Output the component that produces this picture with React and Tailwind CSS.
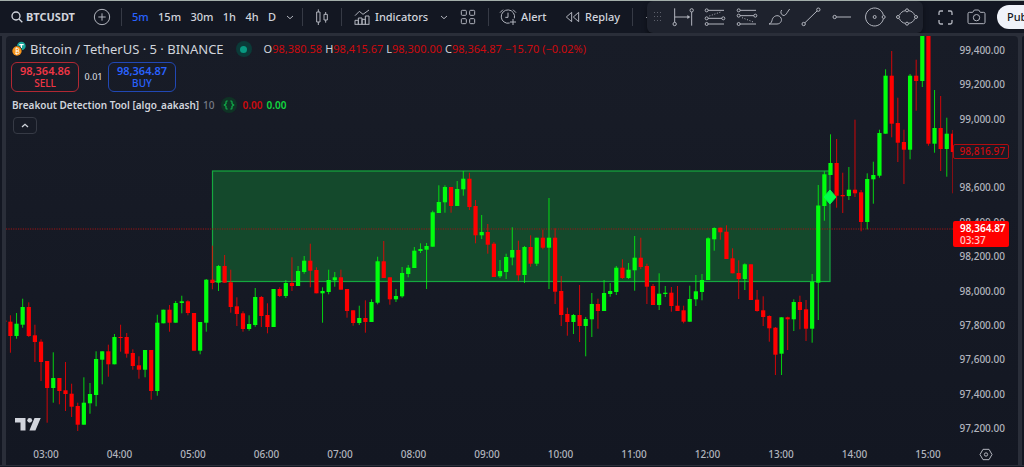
const INTERVALS = ["5m", "15m", "30m", "1h", "4h", "D"];

const PRICES = [
  "99,400.00", "99,200.00", "99,000.00", "98,800.00", "98,600.00", "98,400.00",
  "98,200.00", "98,000.00", "97,800.00", "97,600.00", "97,400.00", "97,200.00",
];

const TIMES = [
  "03:00", "04:00", "05:00", "06:00", "07:00", "08:00", "09:00",
  "10:00", "11:00", "12:00", "13:00", "14:00", "15:00",
];

const UP = "#00ff0d";
const DOWN = "#ff0000";

// [direction, body top, body bottom, wick top, wick bottom]
const CANDLES = [
  ["r", 320.5, 322, 320, 322], ["r", 321.7, 336, 315.3, 352.7], ["g", 323.7, 336, 313, 338.7],
  ["g", 307, 324.7, 298.7, 327.7], ["r", 307, 336, 302.3, 337], ["r", 335.3, 342, 324.7, 362],
  ["r", 341.7, 362, 339.3, 381], ["r", 361, 388, 361, 422.7], ["g", 378, 388, 352.3, 402.7],
  ["r", 378, 391, 378, 404.3], ["r", 390.3, 394, 362, 411], ["r", 393.7, 406.7, 383.7, 417],
  ["r", 406, 424.7, 402.7, 431], ["g", 402.7, 424.7, 377.3, 424.7], ["g", 394, 403.3, 383, 413.7],
  ["g", 359, 395, 351.3, 406.3], ["g", 351.3, 359.7, 351.3, 384.3], ["r", 351.3, 364.3, 344.7, 376.7],
  ["g", 337, 364.3, 334, 364.3], ["r", 337, 338, 324.7, 351.7], ["r", 337, 353.7, 333, 357.7],
  ["r", 353, 366, 349.3, 369.7], ["r", 365.3, 369.7, 356.3, 378.7], ["g", 350, 369.7, 350, 377.3],
  ["r", 350, 391, 350, 399.7], ["g", 322.7, 391, 314.7, 395.7], ["g", 309.7, 323.3, 309.7, 323.3],
  ["r", 309.7, 322.7, 305, 331.7], ["g", 303, 322.7, 301, 322.7], ["g", 301.3, 303, 295.7, 313.3],
  ["r", 301.3, 313, 300.3, 315.3], ["r", 313, 350.7, 313, 350.7], ["g", 322, 350.7, 322, 354.3],
  ["g", 279.7, 322.7, 279, 331.7], ["r", 279.7, 283, 245.7, 289.3], ["g", 266, 282.7, 265, 291],
  ["r", 266, 282.7, 255, 282.7], ["r", 282.3, 307, 269.7, 312.7], ["r", 306.3, 314, 297.3, 326],
  ["r", 313.3, 329, 311.3, 331.7], ["g", 324, 329, 315.3, 330.7], ["g", 297, 325, 288, 326.7],
  ["r", 297, 316, 296, 327], ["r", 315, 327, 303.3, 333.3], ["g", 289, 327, 289, 327],
  ["r", 289, 296, 287.3, 297], ["g", 283, 296, 280, 298], ["r", 283, 286, 257.3, 291],
  ["g", 271, 286, 266, 286], ["g", 260.7, 272, 256, 273.7], ["r", 260.7, 270.7, 243.7, 287.3],
  ["r", 270, 293.3, 267.3, 293.3], ["g", 291, 293.3, 287.3, 322.7], ["g", 280, 292, 269.7, 294.3],
  ["g", 277.3, 280.3, 272, 286.7], ["r", 277.3, 289.7, 269.7, 289.7], ["r", 289, 311, 289, 317.7],
  ["r", 310.3, 323, 310.3, 325.7], ["g", 318, 323, 305.7, 325], ["r", 318, 322, 300.3, 332.7],
  ["g", 302, 322, 299.3, 322], ["g", 261.3, 302.7, 256.7, 304.3], ["r", 261.3, 278, 241, 278],
  ["r", 277.3, 299.3, 277.3, 304.7], ["g", 296, 299.3, 289, 302], ["g", 273, 296.3, 267, 297.7],
  ["g", 267.7, 274, 265, 277.3], ["g", 250.7, 268, 247, 268], ["g", 249, 251, 243.3, 253],
  ["g", 246, 249.7, 243, 289], ["g", 212.3, 246.7, 210.7, 246.7], ["g", 202, 213, 185.3, 213],
  ["g", 187, 202.3, 185.3, 212.7], ["r", 187, 206, 187, 212.7], ["g", 189, 206, 181, 206],
  ["g", 178.7, 189.3, 171, 195.7], ["r", 178.7, 207, 172.7, 210], ["r", 206, 235.3, 200, 243.3],
  ["g", 232, 235.3, 215, 239], ["r", 232, 244.7, 224, 253.7], ["r", 243.7, 277, 242, 277],
  ["g", 271, 276.3, 260, 278], ["g", 257, 272, 253.7, 279], ["g", 250, 257.5, 227.3, 265.3],
  ["r", 250, 275.3, 240.7, 280.7], ["g", 247, 275, 246, 283], ["r", 247, 263.7, 235.3, 266.7],
  ["g", 237.7, 263.7, 237.7, 266], ["r", 237.7, 247.7, 229.7, 249.3], ["g", 237.7, 247.7, 198, 289],
  ["r", 237.7, 291.7, 228.3, 304], ["r", 291, 315, 276, 326], ["r", 314, 322, 307.7, 335.7],
  ["g", 315, 322, 314, 334], ["r", 315, 326, 285, 342], ["g", 319, 326, 317, 356.3],
  ["g", 304, 319.3, 293, 337], ["r", 304, 311, 298.7, 328.7], ["g", 293, 311, 280, 311],
  ["g", 291, 294, 283, 296.7], ["g", 267.7, 292, 266, 295], ["r", 267.7, 278, 259.3, 279],
  ["g", 269.7, 278, 263, 279], ["g", 257.7, 270.3, 236, 290.7], ["r", 257.7, 267, 237.7, 269],
  ["r", 266, 286.7, 263.7, 304], ["r", 286, 305, 284, 305], ["g", 293.7, 305, 273.3, 310],
  ["g", 292.7, 294, 286, 297], ["r", 292.7, 306, 287, 311.7], ["r", 305.7, 311, 286, 311],
  ["r", 310.3, 321.7, 305.7, 323.3], ["g", 299, 321.7, 285.7, 321.7], ["g", 291.3, 299.3, 275, 306],
  ["g", 280, 292, 274, 300.3], ["g", 238.3, 280, 237.3, 280], ["g", 228, 239.3, 227.3, 250.7],
  ["r", 227.7, 232.3, 227.7, 239.7], ["r", 231.7, 259, 225.3, 259], ["r", 258.3, 273.3, 248.3, 273.3],
  ["r", 273, 279, 260.3, 299], ["g", 264.3, 279, 263.3, 290], ["r", 264.3, 300, 264.3, 300],
  ["r", 299.7, 311, 290, 311.7], ["r", 310.3, 317, 296.3, 326], ["r", 316, 328.3, 315.3, 341.7],
  ["r", 327.7, 354.7, 327, 375], ["g", 317.3, 353.7, 317.3, 375], ["r", 317.3, 319.3, 316.7, 350],
  ["g", 302, 319.3, 299.3, 331], ["r", 302, 310, 295.7, 329.3], ["r", 309.3, 328.7, 300, 341],
  ["g", 281.7, 328.7, 274, 342.7], ["g", 205.5, 282.7, 185, 320], ["g", 174.3, 206, 171.3, 220.7],
  ["g", 163, 175, 134.3, 175], ["r", 163, 195.7, 139, 207.7], ["r", 195, 196.3, 172.7, 213],
  ["g", 189.7, 196, 167, 200], ["r", 189.7, 193.3, 119.7, 197], ["r", 192.3, 222, 190, 231.3],
  ["g", 179, 222, 173.3, 229.3], ["g", 175, 179.3, 161.7, 203.7], ["g", 133, 175.7, 129.7, 177.7],
  ["g", 75.7, 133.7, 69.3, 133.7], ["r", 75.7, 123.7, 51, 137.3], ["r", 123, 142.7, 97.7, 162],
  ["r", 142, 149.7, 129.7, 184], ["g", 75.7, 149.7, 74, 159.3], ["r", 75.7, 81, 59.7, 110.7],
  ["g", 36, 81, 36, 87], ["r", 36, 143.7, 36, 145.7], ["g", 128, 143.7, 90, 152.7],
  ["r", 128, 149, 96, 171], ["g", 133.7, 149, 117.7, 176.7], ["r", 133.7, 152, 130, 193.3],
];

function Icon({ box, className, children, weight = 3 }) {
  return (
    <svg
      viewBox={box}
      className={`shrink-0 ${className}`}
      fill="none"
      stroke="currentColor"
      strokeWidth={weight}
      aria-hidden="true"
    >
      {children}
    </svg>
  );
}

function Divider() {
  return <div className="h-[18px] w-px shrink-0 bg-[#363a45]" />;
}

function Chevron() {
  return (
    <Icon box="0 0 24 15" className="h-[5px] w-2">
      <path d="M3 3l9 8 9-8" />
    </Icon>
  );
}

const DRAWING_TOOLS = [
  {
    name: "Date range",
    art: (
      <>
        <path d="M8 4v42M59 15v41M8 30h40" />
        <path d="M46 24l9 6-9 6z" fill="currentColor" stroke="none" />
        <circle cx="8" cy="51" r="5" />
        <circle cx="59" cy="10" r="5" />
      </>
    ),
  },
  {
    name: "Long position",
    art: (
      <>
        <path d="M12 10h48M12 34h42M12 51h48" />
        <path d="M16 27l34-12" strokeDasharray="3 5" />
        <circle cx="8" cy="10" r="4.5" />
        <circle cx="8" cy="34" r="4.5" />
        <circle cx="58" cy="34" r="4.5" />
        <circle cx="8" cy="51" r="4.5" />
      </>
    ),
  },
  {
    name: "Short position",
    art: (
      <>
        <path d="M12 10h48M12 26h42M12 51h48" />
        <path d="M18 32l34 13" strokeDasharray="3 5" />
        <circle cx="8" cy="10" r="4.5" />
        <circle cx="8" cy="26" r="4.5" />
        <circle cx="58" cy="26" r="4.5" />
        <circle cx="8" cy="51" r="4.5" />
      </>
    ),
  },
  {
    name: "Brush",
    art: (
      <>
        <path d="M3 51c8-2 8-8 10-14 3-10 16-15 24-7 8 9 1 21-10 21z" />
        <path d="M41 9c-4 6-3 13 4 16 5 2 9-2 13-9l7-10" />
      </>
    ),
  },
  {
    name: "Trend line",
    art: (
      <>
        <path d="M15 47L51 12" />
        <circle cx="11" cy="51" r="5" />
        <circle cx="55" cy="8" r="5" />
      </>
    ),
  },
  {
    name: "Horizontal ray",
    art: (
      <>
        <path d="M13 30h44" />
        <circle cx="8" cy="30" r="5" />
      </>
    ),
  },
  {
    name: "Circle",
    art: (
      <>
        <path d="M58 24a27 27 0 1 0 0 12" />
        <circle cx="32" cy="30" r="4.5" />
        <circle cx="59" cy="30" r="4.5" />
      </>
    ),
  },
  {
    name: "Ellipse",
    art: (
      <>
        <path d="M10 25c4-8 10-13 18-14M38 11c9 1 15 6 18 14M56 35c-3 8-9 13-18 14M28 49c-8-1-14-6-18-14" />
        <circle cx="33" cy="10" r="4.5" />
        <circle cx="33" cy="50" r="4.5" />
        <circle cx="6" cy="30" r="4.5" />
        <circle cx="60" cy="30" r="4.5" />
      </>
    ),
  },
];

function DrawingToolbar() {
  return (
    <div className="flex h-8 shrink-0 items-center rounded-md bg-[#1e222d] pl-1.5 text-[#b2b5be] shadow-md shadow-black/40">
      <svg viewBox="0 0 9 12" className="mr-[5px] h-3 w-[9px] fill-[#5d606b]" aria-hidden="true">
        {[0, 3, 6].map((x) =>
          [1, 5, 9].map((y) => <rect key={`${x}-${y}`} x={x + 1} y={y} width="1" height="1" />),
        )}
      </svg>
      {DRAWING_TOOLS.map((tool) => (
        <button key={tool.name} type="button" aria-label={tool.name} className="grid w-8 place-items-center">
          <Icon box="0 0 66 60" className="h-5 w-[22px]">
            {tool.art}
          </Icon>
        </button>
      ))}
    </div>
  );
}

function TopBar() {
  return (
    <header className="flex h-8 items-center overflow-hidden bg-[#131722] pl-[11px] text-[11px] leading-4 font-medium text-[#d1d4dc]">
      <button type="button" className="flex w-[82px] shrink-0 items-center gap-[3px] font-bold">
        <Icon box="0 0 36 36" className="size-3" weight={4}>
          <circle cx="15" cy="15" r="12" />
          <path d="M24 24l10 10" />
        </Icon>
        BTCUSDT
      </button>
      <button type="button" aria-label="Compare symbol" className="mr-2.5 shrink-0 text-[#b2b5be]">
        <Icon box="0 0 54 54" className="size-[18px]">
          <circle cx="27" cy="27" r="23" />
          <path d="M27 16v22M16 27h22" />
        </Icon>
      </button>
      <Divider />
      <nav className="flex w-[154px] shrink-0 items-center justify-between pl-2.5" aria-label="Interval">
        {INTERVALS.map((interval) => (
          <button
            key={interval}
            type="button"
            className={interval === "5m" ? "text-[#2962ff]" : ""}
          >
            {interval}
          </button>
        ))}
      </nav>
      <button type="button" aria-label="More intervals" className="mr-2 ml-2.5 shrink-0 text-[#b2b5be]">
        <Chevron />
      </button>
      <Divider />
      <button type="button" aria-label="Candle style" className="mx-3 shrink-0 text-[#b2b5be]">
        <Icon box="0 0 42 54" className="h-[18px] w-3.5">
          <path d="M5 12h10v30H5zM10 4v8M10 42v9M27 19h10v17H27zM32 12v7M32 36v8" />
        </Icon>
      </button>
      <Divider />
      <button type="button" className="ml-3 flex w-[86px] shrink-0 items-center gap-[5px]">
        <Icon box="0 0 48 48" className="size-4 text-[#b2b5be]">
          <path d="M3 20l13-13 11 9L45 3M3 46V34h10v12M13 46V27h11v19M24 46V31h10v15M34 46V21h11v25M2 46h44" />
        </Icon>
        Indicators
      </button>
      <button type="button" aria-label="Favorite indicators" className="shrink-0 text-[#b2b5be]">
        <Chevron />
      </button>
      <button type="button" aria-label="Indicator templates" className="mr-3 ml-3 shrink-0 text-[#b2b5be]">
        <Icon box="0 0 48 48" className="size-4">
          <rect x="4" y="4" width="15" height="15" rx="3" />
          <rect x="29" y="4" width="15" height="15" rx="3" />
          <rect x="4" y="29" width="15" height="15" rx="3" />
          <rect x="29" y="29" width="15" height="15" rx="3" />
        </Icon>
      </button>
      <Divider />
      <button type="button" className="ml-2.5 flex w-[66px] shrink-0 items-center gap-1">
        <Icon box="0 0 54 54" className="size-[18px] text-[#b2b5be]">
          <path d="M32 45a20 20 0 1 1 14-14M27 14v14h-8M3 14l9-9M51 14l-9-9M42 33v18M33 42h18" />
        </Icon>
        Alert
      </button>
      <button type="button" className="flex w-[67px] shrink-0 items-center gap-[5px]">
        <Icon box="0 0 45 36" className="h-3 w-[15px] text-[#b2b5be]">
          <path d="M20 4v28L4 18zM41 4v28L25 18z" strokeLinejoin="round" />
        </Icon>
        Replay
      </button>
      <Divider />
      <div className="flex w-3.5 shrink-0 justify-end">
        <span className="size-px bg-[#b2b5be]" />
      </div>
      <DrawingToolbar />
      <button type="button" aria-label="Fullscreen" className="ml-[15px] shrink-0 text-[#b2b5be]">
        <Icon box="0 0 45 45" className="size-[15px]" weight={4}>
          <path d="M3 15V8q0-5 5-5h7M30 3h7q5 0 5 5v7M42 30v7q0 5-5 5h-7M15 42H8q-5 0-5-5v-7" />
        </Icon>
      </button>
      <button type="button" aria-label="Take a snapshot" className="mr-[11px] ml-3.5 shrink-0 text-[#b2b5be]">
        <Icon box="0 0 57 48" className="h-4 w-[19px]">
          <path d="M7 10h10l5-7h13l5 7h10q4 0 4 4v26q0 4-4 4H7q-4 0-4-4V14q0-4 4-4z" />
          <circle cx="28.5" cy="26" r="9.5" />
        </Icon>
      </button>
      <button
        type="button"
        className="h-6 shrink-0 rounded-full bg-[#f0f3fa] px-2.5 text-[#131722]"
      >
        Publish
      </button>
    </header>
  );
}

function Legend() {
  return (
    <div className="relative flex flex-col items-start pt-[3px] pl-[5px] text-[#d1d4dc]">
      <div className="flex h-5 items-center">
        <svg viewBox="0 0 48 48" className="mr-[3px] size-4" aria-hidden="true">
          <circle cx="31" cy="15" r="13" fill="#1aa59a" />
          <path d="M25 11h13M31 11v10" stroke="#fff" strokeWidth="4" />
          <circle cx="18" cy="30" r="16" fill="#181c27" />
          <circle cx="18" cy="30" r="14" fill="#f7931a" />
          <path
            d="M14 22h5q4 0 4 4t-4 4h-4 5q4 0 4 4t-4 4h-7M15 22v16M17 19v3M17 38v3"
            fill="none"
            stroke="#fff"
            strokeWidth="2.5"
          />
        </svg>
        <h1 className="text-[13px] leading-5">Bitcoin / TetherUS · 5 · BINANCE</h1>
        <span className="mx-3 grid size-4 place-items-center rounded-full bg-[#0b3a38]">
          <span className="size-[7px] rounded-full bg-[#089981]" />
        </span>
        <dl className="flex gap-[3px] text-[11px] leading-4 text-[#cc0a0e]">
          {[
            ["O", "98,380.58"],
            ["H", "98,415.67"],
            ["L", "98,300.00"],
            ["C", "98,364.87"],
          ].map(([label, value]) => (
            <div key={label} className="flex">
              <dt className="text-[#d1d4dc]">{label}</dt>
              <dd>{value}</dd>
            </div>
          ))}
          <dd>−15.70 (−0.02%)</dd>
        </dl>
      </div>

      <div className="mt-[3px] flex items-center text-[11px] leading-3 font-medium">
        <button
          type="button"
          className="h-[30px] w-17 rounded-md border border-[#b22833] text-[#f23645]"
        >
          <span className="block font-semibold">98,364.86</span>
          <span className="block text-[10px]">SELL</span>
        </button>
        <span className="w-[29px] text-center text-[9px]">0.01</span>
        <button
          type="button"
          className="h-[30px] w-17 rounded-md border border-[#2148b5] text-[#2962ff]"
        >
          <span className="block font-semibold">98,364.87</span>
          <span className="block text-[10px]">BUY</span>
        </button>
      </div>

      <div className="mt-[5px] flex h-4 items-center pl-px text-[10px] leading-4 font-semibold">
        <span>Breakout Detection Tool [algo_aakash]</span>
        <span className="ml-1 font-medium text-[#787b86]">10</span>
        <span className="mx-1.5 grid size-4 place-items-center rounded-full bg-[#0f3325] text-[#12b04a]">
          <Icon box="0 0 36 30" className="h-2.5 w-3" weight={3.5}>
            <path d="M14 3H11q-2 0-2 3v5l-5 4 5 4v5q0 3 2 3h3M22 3h3q2 0 2 3v5l5 4-5 4v5q0 3-2 3h-3" />
          </Icon>
        </span>
        <span className="text-[#cc0a0e]">0.00</span>
        <span className="ml-1 text-[#12d63f]">0.00</span>
      </div>

      <button
        type="button"
        aria-label="Collapse legend"
        className="mt-1 ml-0.5 grid h-[17px] w-6 place-items-center rounded-sm border border-[#363a45]"
      >
        <Icon box="0 0 24 15" className="h-[5px] w-2" weight={4}>
          <path d="M3 12l9-8 9 8" />
        </Icon>
      </button>
    </div>
  );
}

function CandleChart() {
  return (
    <svg
      viewBox="6 36 947 410"
      preserveAspectRatio="none"
      className="absolute inset-0 size-full"
      role="img"
      aria-label="Five minute BTCUSDT candles"
    >
      <rect x="212.5" y="171" width="617.5" height="110.5" fill="#14492c" stroke="#14a83f" strokeWidth="1.2" />
      <path d="M6 229h947" stroke="#a01414" strokeDasharray="1.2 1.2" />
      {CANDLES.map(([dir, top, bottom, high, low], i) => {
        const x = 4.3 + i * 6.12;
        const color = dir === "g" ? UP : DOWN;
        return (
          <g key={i} fill={color}>
            <rect x={x - 0.5} y={high} width="1" height={low - high} opacity="0.8" />
            <rect x={x - 2.1} y={top} width="4.2" height={bottom - top} />
          </g>
        );
      })}
      <path d="M830 190l6 7-6 7-6-7z" fill="#00ff4c" stroke="#00ff4c" strokeLinejoin="round" />
      <path d="M15 418h10.5v12.5h-5v-8H15zM34.5 418h6.2l-5.3 12.5h-6z" fill="#d1d4dc" />
      <circle cx="29.7" cy="420.3" r="2.4" fill="#d1d4dc" />
    </svg>
  );
}

function PriceAxis() {
  return (
    <div className="relative flex w-[65px] shrink-0 flex-col justify-between pt-1.5 pr-[13px] pb-2.5 text-right text-[10px] leading-4 font-medium text-[#b2b5be]">
      {PRICES.map((price) => (
        <span key={price} className={price === "98,800.00" ? "invisible" : ""}>
          {price}
        </span>
      ))}
      <span className="absolute top-[108px] right-[9px] left-0 h-[15px] rounded-xs border border-[#b00c10] bg-[#171b26] pr-[3px] leading-[13px] text-[#cc0a0e]">
        98,816.97
      </span>
      <div className="absolute top-[185px] right-[9px] left-0 rounded-xs bg-[#ff0000] py-px pr-[3px] pl-[7px] text-left leading-3 text-white">
        <div className="font-semibold">98,364.87</div>
        <div className="text-white/80">03:37</div>
      </div>
    </div>
  );
}

export default function App() {
  return (
    <div className="flex min-h-screen flex-col overflow-hidden bg-[#2a2e39] font-['Noto_Sans','Open_Sans',sans-serif]">
      <div className="h-px bg-[#a3aeaa]" />
      <TopBar />
      <div className="flex flex-1 pt-[3px]">
        <div className="mr-1 w-0.5 bg-[#131722]" />
        <main className="flex min-w-0 flex-1 flex-col rounded-t-sm bg-linear-to-b from-[#181c27] to-[#131722]">
          <div className="flex flex-1">
            <section className="relative min-w-0 flex-1">
              <CandleChart />
              <Legend />
            </section>
            <PriceAxis />
          </div>
          <div className="flex h-[19px] items-center pb-[3px] text-[10px] leading-4 font-medium text-[#b2b5be]">
            <div className="flex min-w-0 flex-1 justify-between pr-[7px] pl-[22px]">
              {TIMES.map((time) => (
                <span key={time} className="w-9 text-center">
                  {time}
                </span>
              ))}
            </div>
            <button type="button" aria-label="Chart settings" className="grid w-[65px] shrink-0 place-items-center">
              <Icon box="0 0 42 39" className="h-[13px] w-3.5">
                <path d="M12 4h18l9 15.5-9 15.5H12L3 19.5z" />
                <circle cx="21" cy="19.5" r="5" />
              </Icon>
            </button>
          </div>
        </main>
        <div className="ml-1 w-0.5 rounded-tl-sm bg-[#131722]" />
      </div>
      <div className="mt-px h-px bg-[#131722]" />
    </div>
  );
}
